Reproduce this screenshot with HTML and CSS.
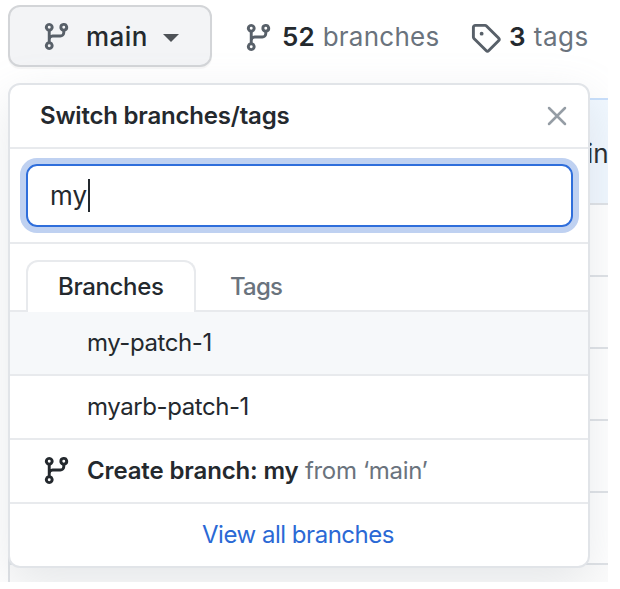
FILE: index.html
```html
<!DOCTYPE html>
<html lang="en">
<head>
<meta charset="utf-8">
<title>Switch branches</title>
<link rel="stylesheet" href="styles.css">
</head>
<body>
<svg class="defs" width="0" height="0" aria-hidden="true">
  <symbol id="branch" viewBox="0 0 16 16"><path fill-rule="evenodd" d="M11.75 2.5a.75.75 0 100 1.5.75.75 0 000-1.5zm-2.25.75a2.25 2.25 0 113 2.122V6A2.5 2.5 0 0110 8.5H6a1 1 0 00-1 1v1.128a2.251 2.251 0 11-1.5 0V5.372a2.25 2.25 0 111.5 0v1.836A2.492 2.492 0 016 7h4a1 1 0 001-1v-.628A2.25 2.25 0 019.5 3.25zM4.25 12a.75.75 0 100 1.5.75.75 0 000-1.5zM3.5 3.25a.75.75 0 111.5 0 .75.75 0 01-1.5 0z"/></symbol>
  <symbol id="tag" viewBox="0 0 16 16"><path fill-rule="evenodd" d="M2.5 7.775V2.75a.25.25 0 01.25-.25h5.025a.25.25 0 01.177.073l6.25 6.25a.25.25 0 010 .354l-5.025 5.025a.25.25 0 01-.354 0l-6.25-6.25a.25.25 0 01-.073-.177zm-1.5 0V2.75C1 1.784 1.784 1 2.75 1h5.025c.464 0 .91.184 1.238.513l6.25 6.25a1.75 1.75 0 010 2.474l-5.026 5.026a1.75 1.75 0 01-2.474 0l-6.25-6.25A1.75 1.75 0 011 7.775zM6 5a1 1 0 100 2 1 1 0 000-2z"/></symbol>
</svg>
<main class="view">
  <header class="toolbar">
    <button class="ref-button"><svg class="icon"><use href="#branch"/></svg><span class="ref-name">main</span><i class="caret"></i></button>
    <a class="stat branches"><svg class="icon"><use href="#branch"/></svg><span><b>52</b> branches</span></a>
    <a class="stat tags"><svg class="icon tag-icon"><use href="#tag"/></svg><span><b>3</b> tags</span></a>
  </header>
  <section class="files">
    <div class="commit">in</div>
    <div class="file"></div>
    <div class="file"></div>
    <div class="file"></div>
    <div class="file"></div>
    <div class="file"></div>
    <div class="file last"></div>
  </section>
  <section class="menu">
    <div class="menu-head"><span class="menu-title">Switch branches/tags</span><svg class="close" viewBox="0 0 20 20"><path d="M2 2l16 16M18 2L2 18"/></svg></div>
    <div class="filter"><div class="field"><span>my</span><i class="cursor"></i></div></div>
    <div class="tabs"><span class="tab active">Branches</span><span class="tab">Tags</span></div>
    <div class="item selected"><span class="patch">my-patch-1</span></div>
    <div class="item"><span class="patch">myarb-patch-1</span></div>
    <div class="item create"><svg class="icon"><use href="#branch"/></svg><span class="label"><b>Create branch: my</b> <span class="from">from ‘main’</span></span></div>
    <a class="all"><span>View all branches</span></a>
  </section>
</main>
</body>
</html>
```
FILE: styles.css
```css
* { box-sizing: border-box; }
body { margin: 0; background: #fff; color: #24292e; font: 24px/1 Inter, "Liberation Sans", sans-serif; }
.defs { position: absolute; }
.view { position: relative; width: 608px; height: 582px; overflow: hidden; }
.icon { width: 31px; height: 31px; flex: none; fill: currentColor; }

.toolbar { display: flex; align-items: center; height: 98px; padding: 5px 0 31px 8px; font-size: 26px; }
.ref-button { display: flex; align-items: center; width: 204px; height: 62px; padding: 1px 0 0 31px; border: 2px solid #d3d5d8; border-radius: 12px; background: #f3f4f6; box-shadow: 0 2px 1px rgba(27,31,35,.04); color: #24292e; font: 500 26px/1 Inter, sans-serif; }
.ref-button .icon { color: #586069; }
.ref-name { width: 61px; margin-left: 14px; padding-top: 1px; letter-spacing: .45px; text-align: left; white-space: nowrap; }
.caret { margin: 2px 0 0 16px; border: 8px solid transparent; border-top-color: #4e5257; border-bottom: 0; }
.stat { display: flex; align-items: center; padding-top: 2px; color: #6a737d; letter-spacing: .25px; white-space: nowrap; }
.stat .icon { color: #586069; }
.stat b { color: #24292e; font-weight: 600; }
.branches { width: 227px; margin-left: 31px; gap: 8px; }
.tags { gap: 8px; letter-spacing: .5px; }

.files { width: 640px; height: 600px; margin-left: 8px; border-left: 2px solid #dfe2e6; }
.commit { height: 105px; padding: 40px 0 0 577px; border-top: 2px solid #c8dffb; background: #f1f8ff; font-size: 26px; line-height: 28px; }
.file { height: 72px; border-top: 2px solid #dfe2e6; }
.last { background: #fcfcfc; }

.menu { position: absolute; left: 8px; top: 83px; width: 582px; height: 485px; border: 2px solid #e1e4e8; border-radius: 12px; background: #fff; box-shadow: 0 16px 48px rgba(140,149,159,.2); overflow: hidden; }
.menu-head { display: flex; align-items: center; justify-content: space-between; height: 64px; padding: 0 21px 0 30px; border-bottom: 2px solid #e8eaed; }
.menu-title { font-weight: 600; letter-spacing: -.2px; }
.close { width: 20px; height: 20px; fill: none; stroke: #959da5; stroke-width: 2.5; stroke-linecap: round; }
.filter { height: 95px; padding: 15px 15px 15px 16px; border-bottom: 2px solid #e8eaed; }
.field { display: flex; align-items: center; height: 63px; padding-left: 22px; border: 2px solid #2f6edb; border-radius: 11px; box-shadow: 0 0 0 6px #bfd1f1; font-size: 26px; }
.cursor { width: 2px; height: 33px; margin-left: 1px; background: #24292e; }
.tabs { display: flex; align-items: flex-end; height: 68px; padding-left: 16px; box-shadow: inset 0 -2px #e8eaed; }
.tab { height: 52px; padding: 15px 34px 0; color: #6a737d; font-weight: 500; letter-spacing: -.8px; }
.tab.active { width: 170px; padding: 13px 0 0 30px; border: 2px solid #e8eaed; border-bottom: 0; border-radius: 12px 12px 0 0; background: #fff; color: #24292e; letter-spacing: -.35px; }
.item { display: flex; align-items: center; height: 64px; padding-left: 77px; border-bottom: 2px solid #e8eaed; letter-spacing: -.42px; white-space: nowrap; }
.selected { background: #f6f8fa; }
.create { padding: 0 0 2px 31px; letter-spacing: -.35px; }
.label { margin-left: 15px; padding-top: 2px; }
.label b { font-weight: 600; letter-spacing: -.13px; }
.from { color: #6a737d; }
.all { display: flex; align-items: center; justify-content: center; height: 62px; padding-right: 2px; color: #2b69d5; letter-spacing: -.48px; }
```
